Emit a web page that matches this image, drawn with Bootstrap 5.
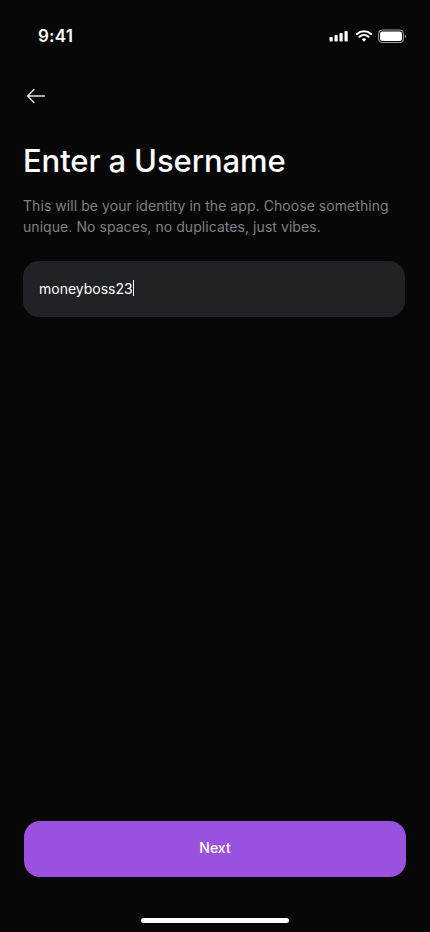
<!DOCTYPE html>
<html lang="en">
<head>
<meta charset="utf-8">
<meta name="viewport" content="width=device-width, initial-scale=1">
<link rel="stylesheet" href="https://cdn.jsdelivr.net/npm/bootstrap@5.3.0/dist/css/bootstrap.min.css">
<style>
html, body { height: 100%; }
body { background: #070707; font-family: Inter, "Liberation Sans", sans-serif; color: #fff; }
.screen { width: 430px; height: 932px; overflow: hidden; }
.status-row { height: 71px; padding: 25px 23px 0 38px; }
.clock { font-size: 17px; font-weight: 600; line-height: 22px; letter-spacing: .2px; }
.back-row { padding: 0 23px; height: 50px; }
.back-btn { line-height: 0; border: 0; background: none; padding: 0; }
.title { font-size: 31px; font-weight: 500; line-height: 38px; letter-spacing: -.1px; margin: 21px 0 0 0; }
.sub { font-size: 14px; line-height: 20.500px; color: #808084; margin: 16px 0 0 0; letter-spacing: .06px; }
.name-field { height: 56px; background: #212226; border-radius: 16px; margin-top: 24px; padding: 0 16px 2px; font-size: 14px; color: #fff; }
.caret-bar { display: inline-block; width: 1px; height: 16px; background: #fff; margin-left: 0; }
.next-btn { height: 56px; width: 382px; border-radius: 16px; background: #9b51e0; border: 0; color: #fff; font-size: 14px; font-weight: 500; padding-bottom: 9px; }
.next-btn:hover { background: #9b51e0; color: #fff; }
.foot-area { padding-bottom: 9px; }
.home-bar { width: 148px; height: 5px; border-radius: 3px; background: #fff; margin-top: 41px; }
.body-area { padding: 0 25px 0 23px; }
</style>
</head>
<body>
<div class="screen d-flex flex-column">
  <div class="status-row d-flex justify-content-between align-items-start">
    <span class="clock">9:41</span>
    <svg width="78" height="15" viewBox="0 0 78 15" fill="none" class="mt-1">
      <rect x=".5" y="8" width="3.200" height="4.500" rx=".8" fill="#fff"/>
      <rect x="5.500" y="6" width="3.200" height="6.500" rx=".8" fill="#fff"/>
      <rect x="10.500" y="4" width="3.200" height="8.500" rx=".8" fill="#fff"/>
      <rect x="15.500" y="2" width="3.200" height="10.500" rx=".8" fill="#fff"/>
      <path d="M28 5a10.500 10.500 0 0 1 14 0M30.500 7.800a6.800 6.800 0 0 1 9 0" stroke="#fff" stroke-width="2" stroke-linecap="round"/>
      <path d="M32.800 10.300a3.400 3.400 0 0 1 4.400 0L35 12.800z" fill="#fff"/>
      <rect x="49.500" y="1" width="25" height="12.500" rx="3.600" stroke="#a0a0a0"/>
      <rect x="51" y="2.500" width="22" height="9.500" rx="2.200" fill="#fff"/>
      <path d="M76 5.500v3.600c.7-.3 1.200-1 1.200-1.800S76.700 5.800 76 5.500z" fill="#a0a0a0"/>
    </svg>
  </div>
  <div class="back-row d-flex align-items-center">
    <button class="back-btn" type="button" aria-label="Back">
      <svg width="26" height="26" viewBox="0 0 26 26" fill="none"><path d="M21.500 13H4.500M11 6.500 4.500 13l6.500 6.500" stroke="#e4e4e4" stroke-width="1.400" stroke-linecap="round" stroke-linejoin="round"/></svg>
    </button>
  </div>
  <div class="body-area flex-grow-1">
    <h1 class="title">Enter a Username</h1>
    <p class="sub">This will be your identity in the app. Choose something unique. No spaces, no duplicates, just vibes.</p>
    <div class="name-field d-flex align-items-center">moneyboss23<span class="caret-bar"></span></div>
  </div>
  <div class="foot-area d-flex flex-column align-items-center">
    <button class="btn next-btn" type="button">Next</button>
    <div class="home-bar"></div>
  </div>
</div>
<script src="https://cdn.jsdelivr.net/npm/bootstrap@5.3.0/dist/js/bootstrap.bundle.min.js"></script>
</body>
</html>
